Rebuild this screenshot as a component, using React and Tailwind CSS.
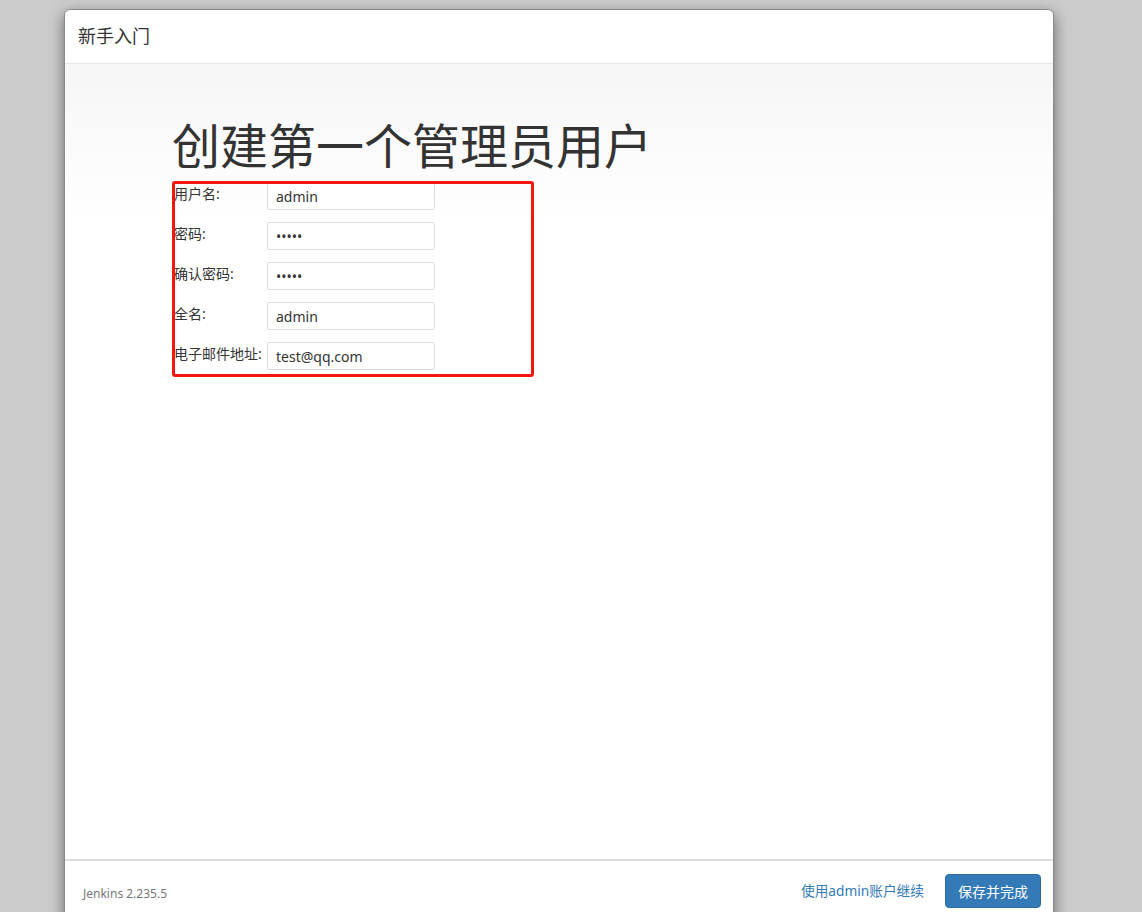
export default function App() {
  const rows = [
    { label: '用户名:', value: 'admin' },
    { label: '密码:', value: '•••••' },
    { label: '确认密码:', value: '•••••' },
    { label: '全名:', value: 'admin' },
    { label: '电子邮件地址:', value: 'test@qq.com' },
  ]

  return (
    <div
      className="h-[912px] w-full overflow-hidden bg-[#cccccc] pt-[9px]"
      style={{ fontFamily: '"Noto Sans", "Noto Sans CJK SC", sans-serif' }}
    >
      <div className="ml-[64px] w-[990px] h-[1000px] bg-white rounded-t-[6px] border border-[#8a8a8a] shadow-[0_5px_15px_rgba(0,0,0,0.5)] flex flex-col">
        <div className="h-[54px] shrink-0 flex items-center px-[13px] border-b border-[#e5e5e5]">
          <span className="text-[18px] text-[#333]">新手入门</span>
        </div>

        <div className="h-[795px] shrink-0 bg-gradient-to-b from-[#f6f6f6] to-white to-[160px] pl-[107px] pt-[55px]">
          <h1 className="text-[48px] leading-[53px] text-[#333] font-normal">
            创建第一个管理员用户
          </h1>
          <div className="relative mt-[9px] w-[362px]">
            <div className="flex flex-col gap-[12px] pl-[2px] pt-[1px]">
              {rows.map((r) => (
                <div key={r.label} className="flex items-start">
                  <div className="w-[93px] text-[14px] leading-[20px] pt-[2px] text-[#333] whitespace-nowrap">
                    {r.label}
                  </div>
                  <div className="w-[168px] h-[28px] border border-[#dcdcdc] rounded-[2px] bg-white px-[8px] flex items-center text-[14px] text-[#333]">
                    {r.value}
                  </div>
                </div>
              ))}
            </div>
            <div className="absolute left-0 top-0 w-[362px] h-[196px] border-[3px] border-[#f5170f] rounded-[3px] pointer-events-none" />
          </div>
        </div>

        <div className="border-t-[2px] border-[#dedede] flex items-start justify-between pl-[18px] pr-[12px] pt-[13px]">
          <span className="text-[12px] text-[#777] mt-[11px]">Jenkins 2.235.5</span>
          <div className="flex items-center gap-[21px]">
            <span className="text-[13.7px] text-[#337ab7]">使用admin账户继续</span>
            <button className="w-[96px] h-[34px] rounded-[4px] bg-[#337ab7] border border-[#2e6da4] text-white text-[14px]">
              保存并完成
            </button>
          </div>
        </div>
      </div>
    </div>
  )
}
